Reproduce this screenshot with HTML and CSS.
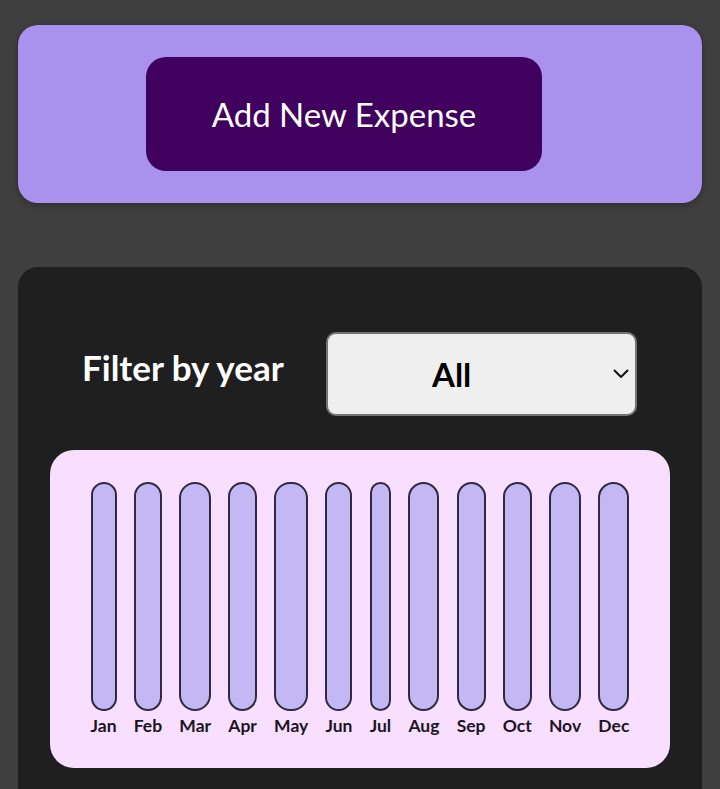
FILE: index.html
```html
<!DOCTYPE html>
<html lang="en">
<head>
<meta charset="utf-8">
<title>Expenses</title>
<link rel="stylesheet" href="styles.css">
</head>
<body>
  <div class="new-expense">
    <button class="add-btn" type="button">Add New Expense</button>
  </div>

  <div class="expenses">
    <div class="filter">
      <label class="filter-label" for="year">Filter by year</label>
      <div class="select-wrap">
        <select id="year" class="filter-select">
          <option>All</option>
          <option>2022</option>
          <option>2021</option>
          <option>2020</option>
        </select>
        <svg class="chevron" width="16" height="9" viewBox="0 0 16 9" aria-hidden="true">
          <path d="M1 1 L8 8 L15 1" fill="none" stroke="#111" stroke-width="2"/>
        </svg>
      </div>
    </div>

    <div class="chart">
      <div class="bar"><div class="bar-inner"></div><div class="bar-label">Jan</div></div>
      <div class="bar"><div class="bar-inner"></div><div class="bar-label">Feb</div></div>
      <div class="bar"><div class="bar-inner"></div><div class="bar-label">Mar</div></div>
      <div class="bar"><div class="bar-inner"></div><div class="bar-label">Apr</div></div>
      <div class="bar"><div class="bar-inner"></div><div class="bar-label">May</div></div>
      <div class="bar"><div class="bar-inner"></div><div class="bar-label">Jun</div></div>
      <div class="bar"><div class="bar-inner"></div><div class="bar-label">Jul</div></div>
      <div class="bar"><div class="bar-inner"></div><div class="bar-label">Aug</div></div>
      <div class="bar"><div class="bar-inner"></div><div class="bar-label">Sep</div></div>
      <div class="bar"><div class="bar-inner"></div><div class="bar-label">Oct</div></div>
      <div class="bar"><div class="bar-inner"></div><div class="bar-label">Nov</div></div>
      <div class="bar"><div class="bar-inner"></div><div class="bar-label">Dec</div></div>
    </div>
  </div>
</body>
</html>
```

FILE: styles.css
```css
* { box-sizing: border-box; }

html, body {
  margin: 0;
  padding: 0;
}

body {
  background: #3f3f3f;
  font-family: "Lato", "Noto Sans", sans-serif;
  height: 789px;
  overflow: hidden;
  padding-top: 25px;
}

.new-expense {
  background: #a892ee;
  margin: 0 18px;
  height: 178px;
  padding: 32px;
  border-radius: 20px;
  box-shadow: 0 2px 8px rgba(0, 0, 0, 0.3);
  text-align: center;
}

.add-btn {
  width: 396px;
  height: 114px;
  margin-right: 32px;
  padding: 0;
  border: none;
  border-radius: 20px;
  background: #40005d;
  color: #fff;
  font-family: inherit;
  font-size: 33px;
  font-weight: 400;
  cursor: pointer;
}

.expenses {
  background: #1f1f1f;
  margin: 64px 18px 0;
  padding: 65px 32px 32px;
  border-radius: 20px;
  height: 600px;
}

.filter {
  display: flex;
  align-items: center;
  justify-content: space-between;
  padding: 0 33px 0 32px;
  height: 84px;
}

.filter-label {
  color: #fff;
  font-weight: 700;
  font-size: 35px;
  margin-bottom: 14px;
}

.select-wrap {
  position: relative;
  width: 311px;
  height: 84px;
}

.filter-select {
  -webkit-appearance: none;
  appearance: none;
  width: 100%;
  height: 100%;
  background: #efefef;
  border: 2px solid #747474;
  border-radius: 10px;
  padding: 0 0 0 104px;
  font-family: inherit;
  font-size: 33px;
  font-weight: 700;
  color: #000;
  outline: none;
}

.chevron {
  position: absolute;
  right: 8px;
  top: 37px;
  pointer-events: none;
}

.chart {
  margin-top: 34px;
  height: 318px;
  background: #f8dfff;
  border-radius: 24px;
  padding: 32px;
  display: flex;
  justify-content: space-around;
}

.bar {
  display: flex;
  flex-direction: column;
  align-items: stretch;
  height: 100%;
}

.bar-inner {
  flex: 1;
  background: #c3b8f3;
  border: 2px solid #32283f;
  border-radius: 16px;
}

.bar-label {
  margin-top: 5px;
  font-size: 17.5px;
  font-weight: 700;
  line-height: 20px;
  color: #1b1523;
  text-align: center;
}
```
